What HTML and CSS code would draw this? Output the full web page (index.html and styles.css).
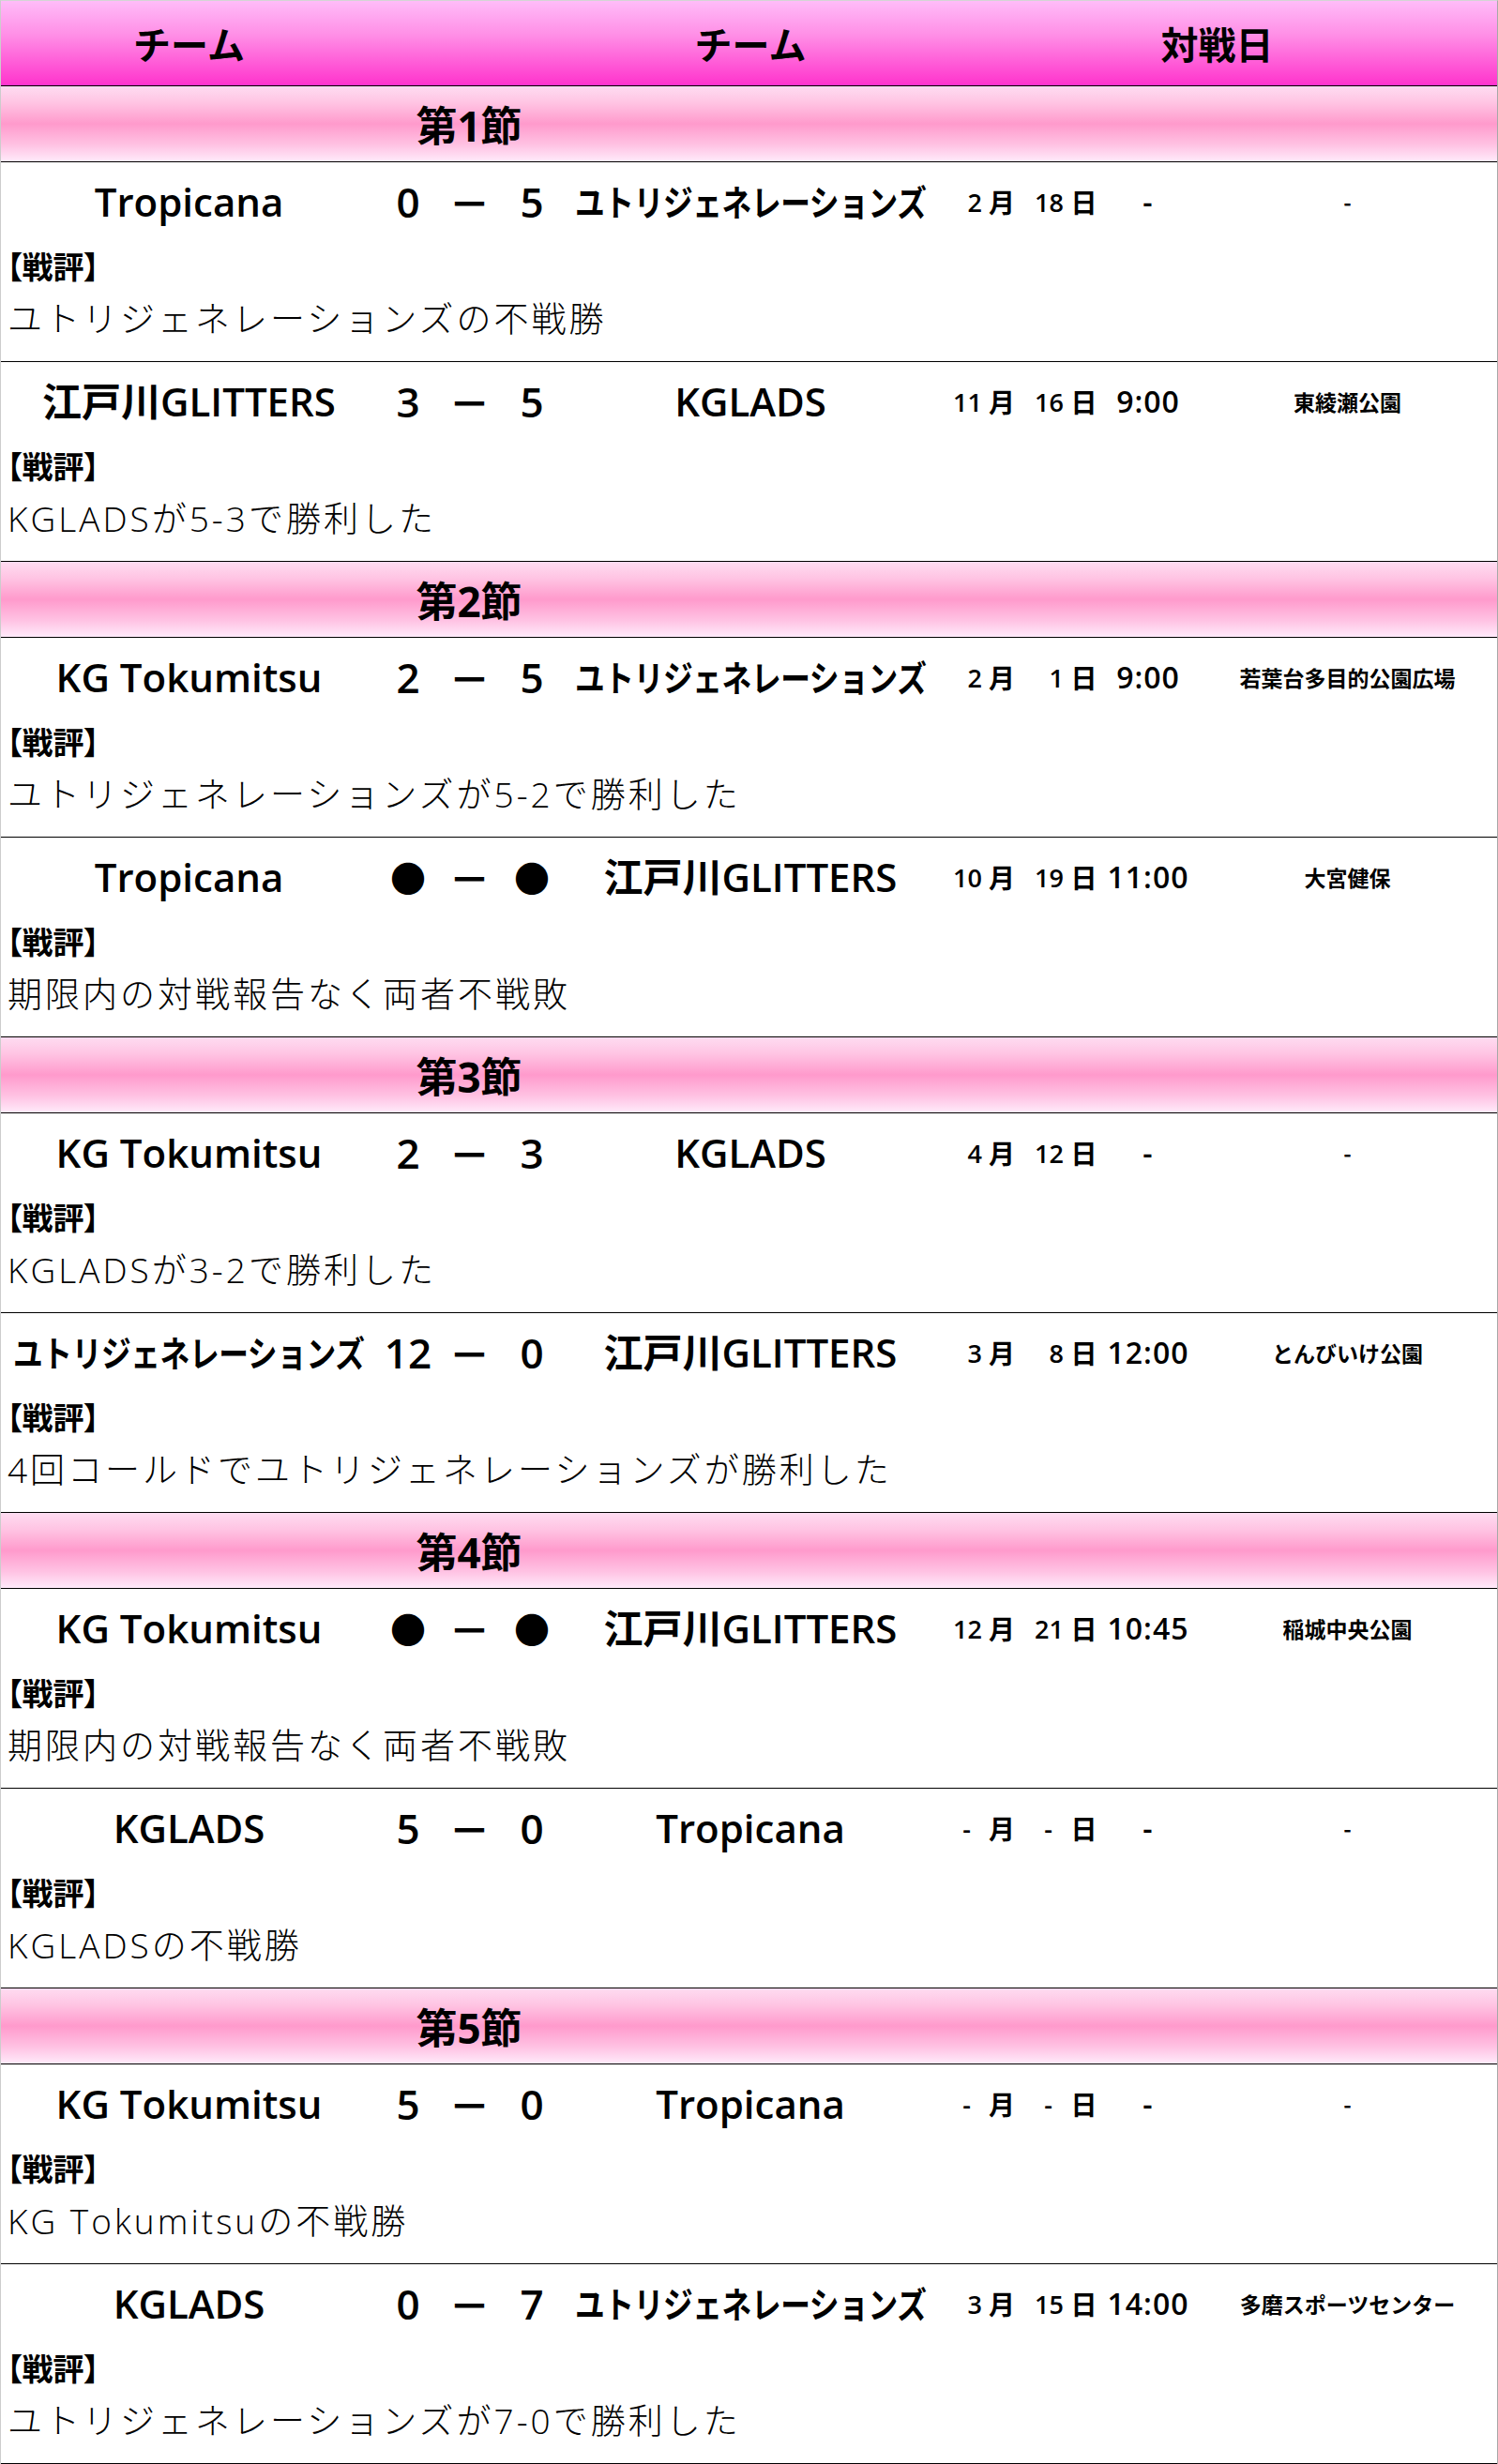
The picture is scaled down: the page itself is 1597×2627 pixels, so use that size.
FILE: index.html
```html
<!DOCTYPE html>
<html lang="ja">
<head>
<meta charset="utf-8">
<title>対戦表</title>
<link rel="stylesheet" href="styles.css">
</head>
<body>
<div class="schedule">
  <div class="head">
    <div class="h-team1">チーム</div>
    <div class="h-team2">チーム</div>
    <div class="h-date">対戦日</div>
  </div>

  <div class="round"><div class="round-title">第1節</div></div>
  <div class="match">
    <div class="line">
      <div class="team">Tropicana</div>
      <div class="score">0</div><div class="dash">－</div><div class="score">5</div>
      <div class="team"><span class="kana">ユトリジェネレーションズ</span></div>
      <div class="date"><span class="num">2</span><span class="unit">月</span><span class="num">18</span><span class="unit">日</span><span class="time">-</span></div>
      <div class="venue">-</div>
    </div>
    <div class="label">【戦評】</div>
    <div class="comment">ユトリジェネレーションズの不戦勝</div>
  </div>
  <div class="match">
    <div class="line">
      <div class="team">江戸川GLITTERS</div>
      <div class="score">3</div><div class="dash">－</div><div class="score">5</div>
      <div class="team">KGLADS</div>
      <div class="date"><span class="num">11</span><span class="unit">月</span><span class="num">16</span><span class="unit">日</span><span class="time">9:00</span></div>
      <div class="venue">東綾瀬公園</div>
    </div>
    <div class="label">【戦評】</div>
    <div class="comment">KGLADSが5-3で勝利した</div>
  </div>

  <div class="round"><div class="round-title">第2節</div></div>
  <div class="match">
    <div class="line">
      <div class="team">KG Tokumitsu</div>
      <div class="score">2</div><div class="dash">－</div><div class="score">5</div>
      <div class="team"><span class="kana">ユトリジェネレーションズ</span></div>
      <div class="date"><span class="num">2</span><span class="unit">月</span><span class="num">1</span><span class="unit">日</span><span class="time">9:00</span></div>
      <div class="venue">若葉台多目的公園広場</div>
    </div>
    <div class="label">【戦評】</div>
    <div class="comment">ユトリジェネレーションズが5-2で勝利した</div>
  </div>
  <div class="match">
    <div class="line">
      <div class="team">Tropicana</div>
      <div class="score mark">●</div><div class="dash">－</div><div class="score mark">●</div>
      <div class="team">江戸川GLITTERS</div>
      <div class="date"><span class="num">10</span><span class="unit">月</span><span class="num">19</span><span class="unit">日</span><span class="time">11:00</span></div>
      <div class="venue">大宮健保</div>
    </div>
    <div class="label">【戦評】</div>
    <div class="comment">期限内の対戦報告なく両者不戦敗</div>
  </div>

  <div class="round"><div class="round-title">第3節</div></div>
  <div class="match">
    <div class="line">
      <div class="team">KG Tokumitsu</div>
      <div class="score">2</div><div class="dash">－</div><div class="score">3</div>
      <div class="team">KGLADS</div>
      <div class="date"><span class="num">4</span><span class="unit">月</span><span class="num">12</span><span class="unit">日</span><span class="time">-</span></div>
      <div class="venue">-</div>
    </div>
    <div class="label">【戦評】</div>
    <div class="comment">KGLADSが3-2で勝利した</div>
  </div>
  <div class="match">
    <div class="line">
      <div class="team"><span class="kana">ユトリジェネレーションズ</span></div>
      <div class="score">12</div><div class="dash">－</div><div class="score">0</div>
      <div class="team">江戸川GLITTERS</div>
      <div class="date"><span class="num">3</span><span class="unit">月</span><span class="num">8</span><span class="unit">日</span><span class="time">12:00</span></div>
      <div class="venue">とんびいけ公園</div>
    </div>
    <div class="label">【戦評】</div>
    <div class="comment">4回コールドでユトリジェネレーションズが勝利した</div>
  </div>

  <div class="round"><div class="round-title">第4節</div></div>
  <div class="match">
    <div class="line">
      <div class="team">KG Tokumitsu</div>
      <div class="score mark">●</div><div class="dash">－</div><div class="score mark">●</div>
      <div class="team">江戸川GLITTERS</div>
      <div class="date"><span class="num">12</span><span class="unit">月</span><span class="num">21</span><span class="unit">日</span><span class="time">10:45</span></div>
      <div class="venue">稲城中央公園</div>
    </div>
    <div class="label">【戦評】</div>
    <div class="comment">期限内の対戦報告なく両者不戦敗</div>
  </div>
  <div class="match">
    <div class="line">
      <div class="team">KGLADS</div>
      <div class="score">5</div><div class="dash">－</div><div class="score">0</div>
      <div class="team">Tropicana</div>
      <div class="date"><span class="num blank">-</span><span class="unit">月</span><span class="num blank">-</span><span class="unit">日</span><span class="time">-</span></div>
      <div class="venue">-</div>
    </div>
    <div class="label">【戦評】</div>
    <div class="comment">KGLADSの不戦勝</div>
  </div>

  <div class="round"><div class="round-title">第5節</div></div>
  <div class="match">
    <div class="line">
      <div class="team">KG Tokumitsu</div>
      <div class="score">5</div><div class="dash">－</div><div class="score">0</div>
      <div class="team">Tropicana</div>
      <div class="date"><span class="num blank">-</span><span class="unit">月</span><span class="num blank">-</span><span class="unit">日</span><span class="time">-</span></div>
      <div class="venue">-</div>
    </div>
    <div class="label">【戦評】</div>
    <div class="comment">KG Tokumitsuの不戦勝</div>
  </div>
  <div class="match">
    <div class="line">
      <div class="team">KGLADS</div>
      <div class="score">0</div><div class="dash">－</div><div class="score">7</div>
      <div class="team"><span class="kana">ユトリジェネレーションズ</span></div>
      <div class="date"><span class="num">3</span><span class="unit">月</span><span class="num">15</span><span class="unit">日</span><span class="time">14:00</span></div>
      <div class="venue">多磨スポーツセンター</div>
    </div>
    <div class="label">【戦評】</div>
    <div class="comment">ユトリジェネレーションズが7-0で勝利した</div>
  </div>
</div>
</body>
</html>
```

FILE: styles.css
```css
html, body {
  margin: 0;
  padding: 0;
  background: #ffffff;
}

.schedule {
  width: 1597px;
  box-sizing: border-box;
  border-top: 1px solid #d4d4d4;
  border-left: 1px solid #cccccc;
  border-right: 1px solid #a8a8a8;
  font-family: "Open Sans", "Noto Sans CJK JP", sans-serif;
  color: #000;
}

.head,
.line {
  display: grid;
  grid-template-columns: 401px 66px 65px 68px 398px 278px 1fr;
  align-items: center;
}

.head {
  height: 90px;
  border-bottom: 1px solid #000;
  background: linear-gradient(to bottom, #ffbcf8 0%, #ff8fe6 40%, #ff33cc 100%);
  font-family: "Noto Sans CJK JP", sans-serif;
  font-weight: 700;
  font-size: 40px;
  line-height: 1;
  text-align: center;
}

.h-team1 { grid-column: 1; }
.h-team2 { grid-column: 5; }
.h-date { grid-column: 6 / 8; }

.round {
  height: 80px;
  border-bottom: 1px solid #000;
  background: linear-gradient(to bottom, #fedcf1 0%, #ffc4e3 22%, #ff9acc 50%, #ffc2e3 78%, #ffeafa 100%);
  display: grid;
  grid-template-columns: 998px 1fr;
  align-items: center;
}

.round-title {
  grid-column: 1;
  text-align: center;
  font-family: "Open Sans", "Noto Sans CJK JP", sans-serif;
  font-weight: 700;
  font-size: 44px;
  line-height: 1;
  padding-top: 4px;
}

.match {
  height: 212px;
  border-bottom: 1px solid #000;
}

.line {
  height: 84px;
}

.team {
  display: flex;
  justify-content: center;
  align-items: center;
  font-weight: 600;
  font-size: 42px;
  line-height: 1;
  white-space: nowrap;
}

.kana {
  display: inline-block;
  font-size: 38px;
  letter-spacing: -0.5px;
  transform: scaleX(0.835);
}

.score {
  text-align: center;
  font-weight: 600;
  font-size: 44px;
  line-height: 1;
}

.score.mark {
  font-family: "Noto Sans CJK JP", sans-serif;
  font-size: 38px;
}

.dash {
  text-align: center;
  font-family: "Noto Sans CJK JP", sans-serif;
  font-weight: 700;
  font-size: 44px;
  line-height: 1;
}

.date {
  display: grid;
  grid-template-columns: 54px 30px 57px 31px 1fr;
  align-items: center;
  font-weight: 600;
  line-height: 1;
}

.num {
  text-align: right;
  padding-right: 6px;
  font-size: 27px;
}

.num.blank {
  padding-right: 18px;
}

.unit {
  text-align: center;
  font-family: "Noto Sans CJK JP", sans-serif;
  font-size: 28px;
  font-weight: 700;
}

.time {
  text-align: center;
  font-size: 32px;
  letter-spacing: 1px;
}

.venue {
  text-align: center;
  font-family: "Noto Sans CJK JP", sans-serif;
  font-weight: 700;
  font-size: 23px;
  line-height: 1;
  white-space: nowrap;
}

.label {
  height: 52px;
  display: flex;
  align-items: center;
  padding-left: 6px;
  font-family: "Noto Sans CJK JP", sans-serif;
  font-weight: 700;
  font-size: 33px;
  line-height: 1;
  font-feature-settings: "palt";
}

.comment {
  height: 60px;
  display: flex;
  align-items: center;
  padding-left: 7px;
  font-family: "Open Sans", "Noto Sans CJK JP", sans-serif;
  font-weight: 300;
  font-size: 37px;
  letter-spacing: 3px;
  line-height: 1;
  white-space: nowrap;
}
```
